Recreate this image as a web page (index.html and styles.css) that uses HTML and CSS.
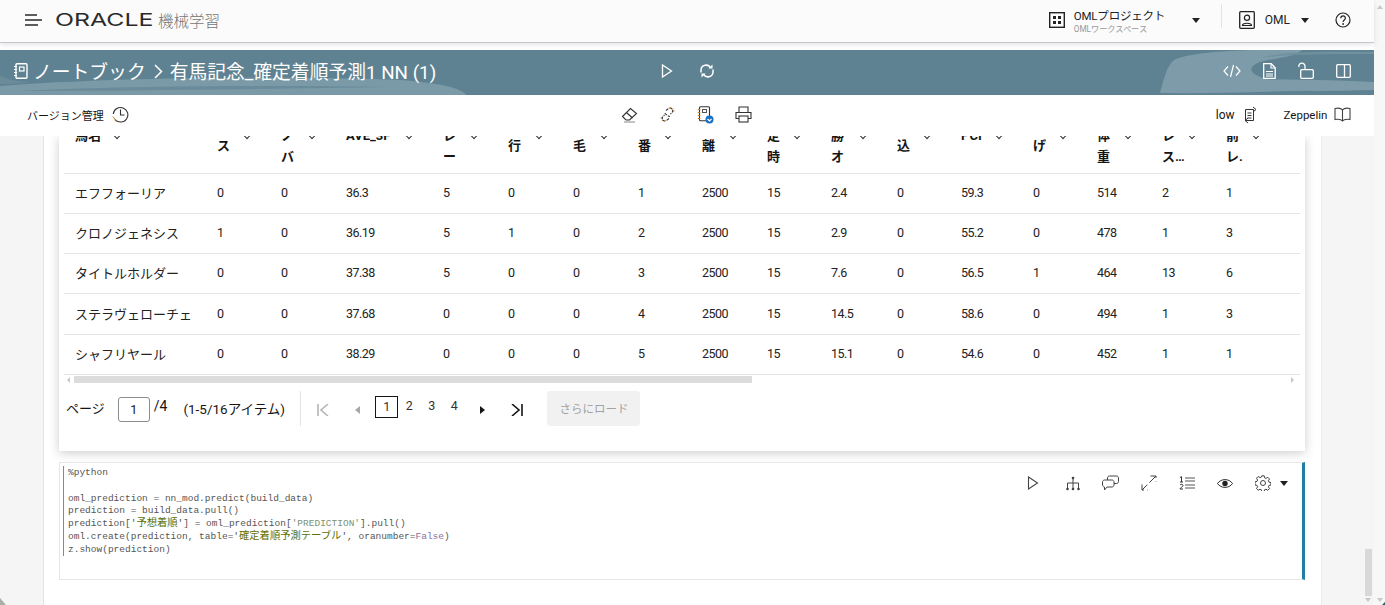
FILE: index.html
```html
<!DOCTYPE html>
<html lang="ja">
<head>
<meta charset="utf-8">
<title>ノートブック</title>
<link rel="stylesheet" href="styles.css">
</head>
<body>
<div class="app">
  <div class="col">
    <header class="top">
      <button class="ib burger"><svg width="18" height="12" viewBox="0 0 18 12"><path d="M0 1h12M0 6h17M0 11h13" stroke="#2a2a2a" stroke-width="1.4" fill="none"/></svg></button>
      <span class="logo"><span class="logo-w">ORACLE</span></span>
      <span class="product">機械学習</span>
      <span class="grow"></span>
      <svg class="proj-ic" width="16" height="16" viewBox="0 0 16 16"><rect x=".7" y=".7" width="14.6" height="14.6" fill="none" stroke="#222" stroke-width="1.4"/><path d="M4 4h3v3H4zM9 4h3v3H9zM4 9h3v3H4zM9 9h3v3H9z" fill="#222"/></svg>
      <div class="proj"><div class="proj-a">OMLプロジェクト</div><div class="proj-b">OMLワークスペース</div></div>
      <span class="caret c1"></span>
      <span class="vline"></span>
      <svg class="user-ic" width="16" height="18" viewBox="0 0 16 18"><rect x=".7" y=".7" width="14.6" height="16.6" rx="1" fill="none" stroke="#222" stroke-width="1.3"/><circle cx="8" cy="6.8" r="2.6" fill="none" stroke="#222" stroke-width="1.2"/><path d="M3.5 14.5c0-3 9-3 9 0z" fill="none" stroke="#222" stroke-width="1.2"/></svg>
      <span class="user">OML</span>
      <span class="caret c2"></span>
      <svg class="help" width="16" height="18" viewBox="0 0 16 18"><circle cx="8" cy="9" r="7" fill="none" stroke="#222" stroke-width="1.2"/><path d="M5.8 7.2c0-3 4.6-3 4.6-.1 0 1.800-2.300 1.900-2.300 3.800" fill="none" stroke="#222" stroke-width="1.200"/><circle cx="8.100" cy="13" r=".9" fill="#222"/></svg>
    </header>
    <section class="banner">
      <svg class="swoosh" width="1374" height="45" viewBox="0 0 1374 45"><path d="M0 36C110 27 300 26 400 30c40 3 62 8 66 15H0z" fill="#7b9aa7"/><path d="M20 41c100-5 240-6 370-4-120 2-260 4-370 4z" fill="#6a8b9a"/><path d="M0 26c10 4 20 6 30 6-10 2-20 2-30 2z" fill="#6a8b9a"/><path d="M1160 43c4-14 6-26 14-33 20-10 90-11 128-10-8 8-30 8-42 12-16 6-8 14 10 18l114 4v2c-60 4-150 8-224 7z" fill="#7d9ba8"/><path d="M1195 33c60-5 120-4 179-1v8c-70 2-130 1-179-7z" fill="#7d9ba8"/><path d="M1260 8c20-6 50-7 114-6v2c-50 0-90 0-114 4z" fill="#6f909e"/></svg>
      <div class="crumb">
        <svg class="nb" width="14" height="16" viewBox="0 0 14 16"><rect x="2" y=".8" width="11" height="14.400" rx="1" fill="none" stroke="#fff" stroke-width="1.400"/><rect x="5.500" y="4" width="4.500" height="4" fill="none" stroke="#fff" stroke-width="1.200"/><path d="M0 3.500h3M0 6.500h3M0 9.500h3M0 12.500h3" stroke="#fff" stroke-width="1.100"/></svg>
        <span>ノートブック</span>
        <svg class="gt" width="9" height="15" viewBox="0 0 9 15"><path d="M1 1l6.500 6.500L1 14" fill="none" stroke="#fff" stroke-width="1.500"/></svg>
        <span>有馬記念_確定着順予測1 NN (1)</span>
      </div>
      <div class="b-mid">
        <svg width="12" height="14" viewBox="0 0 12 14"><path d="M1.500 1l9 6-9 6z" fill="none" stroke="#fff" stroke-width="1.300"/></svg>
        <svg width="16" height="16" viewBox="0 0 16 16"><path d="M2 9.500V7a5 5 0 0 1 9.500-2M14 6.500V9a5 5 0 0 1-9.500 2" fill="none" stroke="#fff" stroke-width="1.500"/><path d="M13.500 1.500v4h-4zM2.500 14.500v-4h4z" fill="#fff"/></svg>
      </div>
      <div class="b-right">
        <svg width="18" height="14" viewBox="0 0 18 14"><path d="M5 2.500L1 7l4 4.500M13 2.500L17 7l-4 4.500M10.500 1l-3 12" fill="none" stroke="#fff" stroke-width="1.200"/></svg>
        <svg width="13" height="16" viewBox="0 0 13 16"><path d="M.7.7h7.500l4 4v10.600H.7z" fill="none" stroke="#fff" stroke-width="1.300"/><path d="M8 1v4h4M3 8.500h7M3 11h7M3 13h7" fill="none" stroke="#fff" stroke-width="1.100"/></svg>
        <svg width="16" height="17" viewBox="0 0 16 17"><rect x="2.700" y="7.700" width="12.600" height="8.600" rx="1" fill="none" stroke="#fff" stroke-width="1.300"/><path d="M.8 5C.8 0 7 0 7 4.500V8" fill="none" stroke="#fff" stroke-width="1.300"/></svg>
        <svg width="15" height="14" viewBox="0 0 15 14"><rect x=".7" y=".7" width="13.600" height="12.600" rx="1" fill="none" stroke="#fff" stroke-width="1.300"/><path d="M8.500 1v12" stroke="#fff" stroke-width="1.300"/></svg>
      </div>
    </section>
    <nav class="tools">
      <span class="t-ver">バージョン管理</span>
      <svg class="t-clock" width="17" height="17" viewBox="0 0 17 17"><path d="M3 13.500A7.300 7.300 0 1 0 1.300 8" fill="none" stroke="#333" stroke-width="1.100"/><path d="M8.500 3.500V9h4" fill="none" stroke="#333" stroke-width="1.100"/><path d="M4.500 15.500l-2-1.500M1 10.500l2 3" stroke="#c77b20" stroke-width="1"/></svg>
      <div class="t-mid">
        <svg width="17" height="17" viewBox="0 0 17 17"><path d="M1.500 10.500L9.500 2.500l6 5-7 6.500H5z" fill="none" stroke="#333" stroke-width="1.100"/><path d="M5.500 6.500l6 5.500" stroke="#333" stroke-width="1.100"/><path d="M3 16h11" stroke="#888" stroke-width="1"/></svg>
        <svg width="17" height="17" viewBox="0 0 17 17"><path d="M7 4.500L9.500 2.500c3-1.500 5 1 4 3.500L11.500 8M10 12.500l-2.500 2c-3 1.500-5-1-4-3.500L5.500 9M6 7c0 1 3 3 5 3.500" fill="none" stroke="#333" stroke-width="1.100" stroke-dasharray="3 1"/><path d="M11 1l.5 1.500M14 2.500l-1 1M15.500 5h-1.500M1.500 12h1.500M3 15l1-1" stroke="#c77b20" stroke-width="1"/></svg>
        <svg width="17" height="18" viewBox="0 0 17 18"><rect x="2.500" y=".8" width="10" height="14" rx="1" fill="none" stroke="#333" stroke-width="1.100"/><path d="M.8 3.500h2.500M.8 6.500h2.500M.8 9.500h2.500M.8 12.500h2.500" stroke="#c77b20" stroke-width="1.200"/><rect x="5.500" y="3.500" width="4" height="3" fill="none" stroke="#555" stroke-width="1"/><circle cx="12.500" cy="13.500" r="4" fill="#1a6fc4"/><path d="M10.500 13l2 2 2-2" stroke="#fff" fill="none" stroke-width="1.200"/></svg>
        <svg width="17" height="17" viewBox="0 0 17 17"><path d="M4 6V1h9v5M4 12.500H1V6.500h15v6h-3" fill="none" stroke="#333" stroke-width="1.100"/><rect x="4" y="10" width="9" height="6" fill="none" stroke="#333" stroke-width="1.100"/></svg>
      </div>
      <span class="t-low">low</span>
      <svg class="t-lowic" width="15" height="18" viewBox="0 0 15 18"><path d="M2.500 3.500h8v11h-8zM4.500 7h4M4.500 9.500h4M4.500 12h4" fill="none" stroke="#333" stroke-width="1"/><path d="M10 1l3 2.500L10 6M5 12l-3 2.500L5 17" fill="none" stroke="#333" stroke-width="1"/></svg>
      <span class="t-zep">Zeppelin</span>
      <svg class="t-book" width="17" height="15" viewBox="0 0 17 15"><path d="M8.500 3C7 1 4 .8 1 1.500v11c3-.5 6-.5 7.500 1.500 1.500-2 4.500-2 7.500-1.500v-11C13 .8 10 1 8.500 3zM8.500 3v11" fill="none" stroke="#444" stroke-width="1.100"/></svg>
    </nav>
    <div class="content">
      <div class="gutter g-l"></div>
      <main class="page">
        <article class="card">
          <div class="tbl-wrap">
            <table class="tbl">
              <thead>
                <tr>
                  <th class="w142"><div class="th a start"><span>馬名</span><i></i></div></th>
                  <th class="w64"><div class="th b"><span>クラ<br>ス</span><i></i></div></th>
                  <th class="w65"><div class="th a"><span>ノ<br>バ</span><i></i></div></th>
                  <th class="w97"><div class="th a"><span>AVE_3F</span><i></i></div></th>
                  <th class="w65"><div class="th a"><span>レ<br>ー</span><i></i></div></th>
                  <th class="w65"><div class="th b"><span>先<br>行</span><i></i></div></th>
                  <th class="w65"><div class="th b"><span>栗<br>毛</span><i></i></div></th>
                  <th class="w64"><div class="th b"><span>馬<br>番</span><i></i></div></th>
                  <th class="w65"><div class="th b"><span>距<br>離</span><i></i></div></th>
                  <th class="w64"><div class="th a"><span>定<br>時</span><i></i></div></th>
                  <th class="w66"><div class="th a"><span>勝<br>オ</span><i></i></div></th>
                  <th class="w64"><div class="th b"><span>追<br>込</span><i></i></div></th>
                  <th class="w72"><div class="th a"><span>PCI</span><i></i></div></th>
                  <th class="w64"><div class="th b"><span>逃<br>げ</span><i></i></div></th>
                  <th class="w65"><div class="th a"><span>体<br>重</span><i></i></div></th>
                  <th class="w64"><div class="th a"><span>レ<br>ス…</span><i></i></div></th>
                  <th class="w85"><div class="th a last"><span>前<br>レ.</span><i></i></div></th>
                </tr>
              </thead>
              <tbody>
                <tr><td class="nm">エフフォーリア</td><td>0</td><td>0</td><td>36.3</td><td>5</td><td>0</td><td>0</td><td>1</td><td>2500</td><td>15</td><td>2.4</td><td>0</td><td>59.3</td><td>0</td><td>514</td><td>2</td><td>1</td></tr>
                <tr><td class="nm">クロノジェネシス</td><td>1</td><td>0</td><td>36.19</td><td>5</td><td>1</td><td>0</td><td>2</td><td>2500</td><td>15</td><td>2.9</td><td>0</td><td>55.2</td><td>0</td><td>478</td><td>1</td><td>3</td></tr>
                <tr><td class="nm">タイトルホルダー</td><td>0</td><td>0</td><td>37.38</td><td>5</td><td>0</td><td>0</td><td>3</td><td>2500</td><td>15</td><td>7.6</td><td>0</td><td>56.5</td><td>1</td><td>464</td><td>13</td><td>6</td></tr>
                <tr><td class="nm">ステラヴェローチェ</td><td>0</td><td>0</td><td>37.68</td><td>0</td><td>0</td><td>0</td><td>4</td><td>2500</td><td>15</td><td>14.5</td><td>0</td><td>58.6</td><td>0</td><td>494</td><td>1</td><td>3</td></tr>
                <tr><td class="nm">シャフリヤール</td><td>0</td><td>0</td><td>38.29</td><td>0</td><td>0</td><td>0</td><td>5</td><td>2500</td><td>15</td><td>15.1</td><td>0</td><td>54.6</td><td>0</td><td>452</td><td>1</td><td>1</td></tr>
              </tbody>
            </table>
          </div>
          <div class="hscroll"><span class="arr al"></span><span class="hthumb"></span><span class="grow"></span><span class="arr ar"></span></div>
          <div class="pager">
            <span class="p-label">ページ</span>
            <span class="p-input">1</span>
            <span class="p-total">/4</span>
            <span class="p-range">(1-5/16アイテム)</span>
            <span class="p-sep"></span>
            <svg class="p-first" width="12" height="12" viewBox="0 0 12 12"><path d="M1 0v12M11 0L4 6l7 6" fill="none" stroke="#b5b5b5" stroke-width="1.600"/></svg>
            <span class="p-prev"></span>
            <span class="p-num cur">1</span>
            <span class="p-num">2</span>
            <span class="p-num">3</span>
            <span class="p-num">4</span>
            <span class="p-next"></span>
            <svg class="p-last" width="12" height="12" viewBox="0 0 12 12"><path d="M11 0v12M1 0l7 6-7 6" fill="none" stroke="#161513" stroke-width="1.600"/></svg>
            <button class="p-load">さらにロード</button>
          </div>
        </article>
        <section class="cell">
          <pre class="code">%python

oml_prediction = nn_mod.predict(build_data)
prediction = build_data.pull()
prediction['<span class="str">予想着順</span>'] = oml_prediction[<span class="str2">'PREDICTION'</span>].pull()
oml.create(prediction, table='<span class="str">確定着順予測テーブル</span>', oranumber=<span class="kw">False</span>)
z.show(prediction)</pre>
          <div class="cell-tools">
            <svg class="ct-play" width="12" height="14" viewBox="0 0 12 14"><path d="M1.500 1l9 6-9 6z" fill="none" stroke="#444" stroke-width="1.100"/></svg>
            <svg width="14" height="15" viewBox="0 0 14 15"><path d="M7 2v10M1.500 12V7h11v5" fill="none" stroke="#444" stroke-width="1"/><circle cx="7" cy="2" r="1.300" fill="#444"/><circle cx="1.500" cy="13" r="1.300" fill="#444"/><circle cx="7" cy="13" r="1.300" fill="#444"/><circle cx="12.500" cy="13" r="1.300" fill="#444"/></svg>
            <svg width="17" height="16" viewBox="0 0 17 16"><path d="M5.500 5V3c0-1.200.8-2 2-2h7c1.200 0 2 .8 2 2v3.500c0 1.200-.8 2-2 2H12" fill="none" stroke="#444" stroke-width="1"/><path d="M2.500 5h7.500c1 0 2 1 2 2v3c0 1-1 2-2 2H5l-2.500 3v-3c-1 0-2-1-2-2V7c0-1 1-2 2-2z" fill="none" stroke="#444" stroke-width="1"/></svg>
            <svg width="16" height="16" viewBox="0 0 16 16"><path d="M1 15L15 1M9.500 1H15v5.500M1 9.500V15h5.500" fill="none" stroke="#444" stroke-width="1" stroke-dasharray="7.500 3 30"/></svg>
            <svg width="16" height="14" viewBox="0 0 16 14"><path d="M6 2h10M6 5h10M6 9h10M6 12h10" stroke="#555" stroke-width="1"/><path d="M1 1.500l1.500-.8V6M1 6h3M1 9c.5-1 3-1 3 .5S1 11.500 1 13h3" fill="none" stroke="#333" stroke-width="1"/></svg>
            <svg width="16" height="11" viewBox="0 0 16 11"><path d="M.5 5.500C4 .3 12 .3 15.500 5.500 12 10.700 4 10.700.5 5.500z" fill="none" stroke="#333" stroke-width="1"/><circle cx="8" cy="5.500" r="2.700" fill="#222"/></svg>
            <span class="gear"><svg width="16" height="16" viewBox="0 0 16 16"><circle cx="8" cy="8" r="2.500" fill="none" stroke="#444" stroke-width="1"/><path d="M6.800.8h2.400l.4 2 1.400.6 1.800-1.100 1.700 1.700-1.100 1.800.6 1.400 2 .4v2.400l-2 .4-.6 1.400 1.100 1.800-1.700 1.700-1.800-1.100-1.400.6-.4 2H6.800l-.4-2-1.400-.6-1.800 1.100-1.700-1.700 1.100-1.800-.6-1.400-2-.4V6.800l2-.4.600-1.400-1.100-1.800 1.700-1.700 1.800 1.100 1.400-.6z" fill="none" stroke="#444" stroke-width="1"/></svg><span class="caret c3"></span></span>
          </div>
        </section>
      </main>
      <div class="gutter g-r"><span class="vthumb"></span><span class="arr-d"></span></div>
    </div>
  </div>
  <div class="winbar"><span class="arr-u"></span><span class="grow"></span><span class="arr-d"></span></div>
  <span class="corner cl"></span>
  <span class="corner cr"></span>
</div>
</body>
</html>
```
FILE: styles.css
```css
* { box-sizing: border-box; }
html, body { margin: 0; height: 605px; overflow: hidden; }
body { font-family: Roboto, "Noto Sans CJK JP", sans-serif; color: #161513; background: #fff; font-size: 13px; }
.app { display: flex; height: 605px; position: relative; }
.col { width: 1374px; display: flex; flex-direction: column; }
.grow { flex: 1; }
.winbar { width: 11px; background: #f7f7f7; display: flex; flex-direction: column; align-items: center; padding: 5px 0 3px; }
.arr-u { border: 3px solid transparent; border-bottom: 4px solid #c8c8c8; border-top: 0; }
.arr-d { border: 3px solid transparent; border-top: 4px solid #c8c8c8; border-bottom: 0; }
.corner { position: absolute; bottom: 0; width: 0; height: 0; }
.cl { left: 0; border-left: 6px solid #a9b0a8; border-top: 7px solid transparent; }
.cr { right: 0; border-right: 3px solid #2d5563; border-top: 3px solid transparent; }

.top { height: 43px; flex: none; margin-bottom: 7px; display: flex; align-items: center; background: #fbfbfb; border-bottom: 1px solid #c4c7cf; box-shadow: 0 2px 5px rgba(0,0,0,.1); position: relative; padding: 0 23px 2px 0; }
.ib { border: 0; background: none; padding: 0; display: flex; }
.burger { margin-left: 25px; }
.logo { width: 98px; margin-left: 12px; height: 20px; display: block; }
.logo-w { display: inline-block; font: 400 17.5px/20px Inter, sans-serif; color: #2a2a2a; transform: scaleX(1.42); transform-origin: left center; }
.product { margin-left: 5px; font-size: 15.5px; color: #757575; font-weight: 300; }
.proj-ic { margin-right: 9px; }
.proj { width: 118px; }
.proj-a { font-size: 11.5px; letter-spacing: -.2px; line-height: 15px; color: #222; margin-top: 4px; }
.proj-b { font-size: 8.2px; line-height: 11px; color: #999; }
.caret { display: inline-block; border-left: 4px solid transparent; border-right: 4px solid transparent; border-top: 5px solid #222; }
.vline { width: 1px; height: 24px; background: #e4e4e4; margin-left: 21px; margin-right: 17px; margin-top: -8px; }
.user { font-size: 12px; margin-left: 10px; margin-right: 11px; color: #222; }
.help { margin-left: 26px; }

.banner { height: 45px; flex: none; background: #5f8293; color: #fff; display: flex; align-items: center; position: relative; padding-bottom: 4px; }
.swoosh { position: absolute; left: 0; top: 0; }
.crumb { position: relative; display: flex; align-items: center; margin-left: 14px; font-size: 18.8px; width: 646px; }
.nb { margin-right: 5px; }
.gt { margin: 2px 7px 0 8px; }
.b-mid { position: relative; display: flex; align-items: center; width: 125px; gap: 26px; margin-left: 1px; }
.b-right { position: relative; margin-left: auto; margin-right: 23px; display: flex; align-items: center; gap: 22px; }

.tools { height: 41px; flex: none; background: #fff; display: flex; align-items: center; position: relative; padding-bottom: 2px; }
.t-ver { margin-left: 27px; font-size: 11px; }
.t-clock { margin-left: 8px; }
.t-mid { margin-left: 492px; display: flex; gap: 21px; width: 594px; }
.t-low { font-size: 12px; margin-left: 1px; margin-right: -1px; }
.t-lowic { margin-left: 9px; }
.t-zep { font-size: 11.5px; margin-left: 26px; margin-right: -1px; }
.t-book { margin-left: 8px; }

.content { flex: 1; min-height: 0; display: flex; overflow: hidden; }
.gutter { background: #f5f5f5; flex: none; }
.g-l { width: 44px; border-right: 1px solid #e2e2e2; }
.g-r { width: 53px; border-left: 1px solid #ececec; display: flex; flex-direction: column; align-items: flex-end; padding: 413px 2px 3px 0; }
.vthumb { width: 7px; height: 47px; background: #d8d8d8; }
.g-r .arr-d { margin: 2px 1px 0 0; }
.page { width: 1277px; background: #fff; padding: 0 16px 0 15px; flex: none; }

.card { height: 315px; background: #fff; box-shadow: 0 2px 10px rgba(0,0,0,.2); padding: 0 5px; }
.tbl-wrap { overflow: hidden; }
.tbl { border-collapse: collapse; table-layout: fixed; width: 1236px; }
.tbl th { height: 37px; padding: 0; vertical-align: top; border-bottom: 1px solid #e4e4e4; font-size: 13px; text-align: left; }
.th { height: 37px; padding: 0 20px 0 11px; display: flex; justify-content: space-between; line-height: 21px; font-weight: 700; white-space: nowrap; }
.th.start { justify-content: flex-start; gap: 13px; }
.th.last { padding-right: 41px; }
.th.a { margin-top: -11px; }
.th.b { margin-top: -22px; }
.th i { width: 6px; height: 6px; flex: none; border: solid #333; border-width: 0 1px 1px 0; transform: rotate(45deg); transform-origin: center; }
.th.a i { margin-top: 7px; }
.th.b i { margin-top: 18px; }
.w142 { width: 142px; } .w64 { width: 64px; } .w65 { width: 65px; } .w66 { width: 66px; }
.w72 { width: 72px; } .w85 { width: 85px; } .w97 { width: 97px; }
.tbl td { height: 40.3px; padding: 0 0 2px 11px; border-bottom: 1px solid #e4e4e4; font-size: 12.5px; letter-spacing: -.55px; white-space: nowrap; overflow: hidden; color: #222; }
.tbl td.nm { font-size: 13px; letter-spacing: 0; }

.hscroll { height: 10px; display: flex; align-items: center; padding: 0 3px; }
.hthumb { width: 678px; height: 7px; background: #dcdcdc; margin-left: 4px; }
.arr { border: 3px solid transparent; }
.al { border-right: 3px solid #c8c8c8; border-left: 0; }
.ar { border-left: 3px solid #c8c8c8; border-right: 0; margin-right: 3px; }

.pager { display: flex; align-items: flex-start; height: 40px; margin-top: 6px; margin-left: 2px; font-size: 13px; }
.p-label { margin-top: 7px; }
.p-input { width: 32px; height: 25px; margin: 6px 0 0 13px; border: 1px solid #8c8c8c; border-radius: 3px; text-align: center; line-height: 23px; font-size: 12.5px; }
.p-total { margin: 7px 0 0 4px; font-size: 14px; }
.p-range { margin: 7px 0 0 16px; width: 105px; font-size: 13.5px; white-space: nowrap; }
.p-sep { width: 1px; height: 35px; background: #e4e4e4; margin-left: 12px; }
.p-first { margin: 13px 0 0 16px; }
.p-prev { margin: 15px 0 0 26px; border: 4px solid transparent; border-right: 5px solid #a8a8a8; border-left: 0; }
.p-num { width: 22.5px; height: 22px; margin-top: 5px; text-align: center; line-height: 20px; font-size: 12.5px; color: #333; }
.p-num.cur { border: 1px solid #161513; margin-left: 15px; }
.p-next { margin: 15px 0 0 15px; border: 4px solid transparent; border-left: 5px solid #161513; border-right: 0; }
.p-last { margin: 13px 0 0 26px; }
.p-load { width: 93px; height: 35px; margin: 0 0 0 24px; border: 0; border-radius: 3px; background: #f1f1f1; color: #a3a3a3; font: 11.5px Roboto, "Noto Sans CJK JP", sans-serif; }

.cell { height: 118px; margin-top: 11px; border: 1px solid #e6e6e6; border-right: 3px solid #1f7fa3; display: flex; justify-content: space-between; }
.code { margin: 3px 0 0 3px; padding: 1px 0 0 4px; height: 90px; border-left: 1px solid #888; font: 9.5px/12.8px "Liberation Mono", monospace; color: #555; }
.str { color: #5d7000; font-family: "Noto Sans CJK JP", sans-serif; font-size: 10.3px; line-height: 0; }
.str2 { color: #7d9272; }
.kw { color: #8a6f9e; }
.cell-tools { display: flex; align-items: center; height: 20px; margin-top: 10px; margin-right: 14px; gap: 22px; }
.ct-play { margin-right: 5px; }
.gear { display: flex; align-items: center; gap: 9px; }
```
